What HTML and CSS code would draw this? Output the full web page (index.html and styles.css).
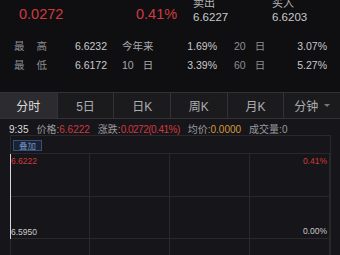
FILE: index.html
```html
<!DOCTYPE html>
<html lang="zh">
<head>
  <meta charset="UTF-8" />
  <meta name="viewport" content="width=device-width, initial-scale=1.0" />
  <title>分时</title>
  <link rel="stylesheet" href="styles.css">
</head>
<body>
  <div class="quote">
    <div class="q-main red">0.0272</div>
    <div class="q-main red">0.41%</div>
    <div class="q-side">
      <span class="q-label">卖出</span>
      <span class="q-val">6.6227</span>
    </div>
    <div class="q-side">
      <span class="q-label">买入</span>
      <span class="q-val">6.6203</span>
    </div>
  </div>

  <div class="stats">
    <span class="lbl wide">最<span class="sp">高</span></span>
    <span class="val">6.6232</span>
    <span class="lbl mid">今年来</span>
    <span class="val">1.69%</span>
    <span class="lbl end">20<span class="day">日</span></span>
    <span class="val">3.07%</span>

    <span class="lbl wide">最<span class="sp">低</span></span>
    <span class="val">6.6172</span>
    <span class="lbl mid">10<span class="day">日</span></span>
    <span class="val">3.39%</span>
    <span class="lbl end">60<span class="day">日</span></span>
    <span class="val">5.27%</span>
  </div>

  <nav class="tabs">
    <a class="active">分时</a>
    <a>5日</a>
    <a>日K</a>
    <a>周K</a>
    <a>月K</a>
    <a>分钟<i class="caret"></i></a>
  </nav>

  <section class="panel">
    <div class="info">
      <span class="time">9:35</span>
      <span>价格:<b class="red">6.6222</b></span>
      <span>涨跌:<b class="red tight">0.0272(0.41%)</b></span>
      <span>均价:<b class="gold">0.0000</b></span>
      <span>成交量:0</span>
    </div>

    <div class="chart">
      <div class="chart-head">
        <button class="overlay-btn">叠加</button>
      </div>
      <div class="grid">
        <div></div><div></div><div></div><div></div>
        <div></div><div></div><div></div><div></div>
        <div></div><div></div><div></div><div></div>
        <span class="axis tl up">6.6222</span>
        <span class="axis tr up">0.41%</span>
        <span class="axis bl">6.5950</span>
        <span class="axis br">0.00%</span>
        <span class="price-line"></span>
      </div>
    </div>
  </section>
</body>
</html>
```

FILE: styles.css
```css
* {
  margin: 0;
  padding: 0;
  box-sizing: border-box;
}
body {
  font-family: 'Liberation Sans', 'Noto Sans CJK SC', sans-serif;
  background: #0f0f11;
  color: #c9c9cb;
  width: 340px;
  height: 255px;
  overflow: hidden;
}
.red {
  color: #cf3a3f;
}
.gold {
  color: #d59a3c;
}
b {
  font-weight: normal;
}

/* top quote */
.quote {
  display: grid;
  grid-template-columns: 117px 57px 79px 1fr;
  padding-left: 19px;
  margin-top: -2px;
  height: 24px;
}
.q-main {
  padding-top: 8px;
  font-size: 14.5px;
  line-height: 16px;
}
.q-side {
  display: flex;
  flex-direction: column;
}
.q-label {
  font-size: 11px;
  line-height: 11px;
  color: #b5b5b8;
}
.q-val {
  margin-top: 2px;
  font-size: 11.5px;
  line-height: 13px;
  color: #c9c9cb;
}

/* high / low stats */
.stats {
  display: grid;
  grid-template-columns: 50px 43px 63px 47px 73px 37px;
  grid-template-rows: 19px 19px;
  align-items: center;
  padding: 14px 0 0 14px;
  height: 70px;
  font-size: 10.5px;
}
.lbl {
  color: #8d8d91;
  font-size: 10.5px;
}
.lbl.mid {
  padding-left: 15px;
  color: #a9a9ac;
}
.lbl.end {
  padding-left: 17px;
}
.sp {
  margin-left: 12px;
}
.day {
  margin-left: 9px;
}
.val {
  text-align: right;
  color: #c9c9cb;
}

/* period tabs */
.tabs {
  display: grid;
  grid-template-columns: repeat(6, 1fr);
  height: 27px;
  background: #1b1b1e;
  border-top: 1px solid #333337;
  border-bottom: 1px solid #333337;
}
.tabs a {
  display: flex;
  align-items: center;
  justify-content: center;
  font-size: 12px;
  color: #aeaeb2;
  border-left: 1px solid #333337;
}
.tabs a:first-child {
  border-left: none;
}
.tabs a.active {
  background: #2c2c30;
  color: #dcdcde;
}
.caret {
  display: inline-block;
  margin-left: 6px;
  border-left: 3px solid transparent;
  border-right: 3px solid transparent;
  border-top: 3px solid #77777b;
}

/* chart panel */
.panel {
  background: #161519;
  height: 136px;
}
.info {
  display: flex;
  gap: 8px;
  height: 16px;
  padding: 5px 0 0 9px;
  font-size: 10px;
  line-height: 11px;
  color: #9a9a9e;
}
.info .time {
  color: #dcdcde;
}
.info .tight {
  letter-spacing: -0.5px;
}
.chart {
  margin: 0 9px 0 10px;
  border: 1px solid #29292d;
  border-bottom: none;
  height: 120px;
}
.chart-head {
  height: 17px;
  padding: 4px 0 0 2px;
}
.overlay-btn {
  display: block;
  width: 29px;
  height: 11px;
  font-family: 'Noto Sans CJK SC', sans-serif;
  font-size: 8.5px;
  line-height: 9px;
  color: #6f8fc0;
  background: #1a2233;
  border: 1px solid #34507a;
}
.grid {
  position: relative;
  display: grid;
  grid-template-columns: repeat(4, 1fr);
  grid-template-rows: 43px 42px 30px;
  border-top: 1px solid #29292d;
  margin-left: -1px;
}
.grid div {
  border-right: 1px solid #29292d;
  border-bottom: 1px solid #29292d;
}
.axis {
  position: absolute;
  font-size: 8.5px;
  line-height: 9px;
  color: #c9c9cb;
  background: #161519;
}
.axis.up {
  color: #cf3a3f;
}
.axis.tl {
  top: 3px;
  left: 1px;
}
.axis.tr {
  top: 3px;
  right: 3px;
}
.axis.bl {
  top: 74px;
  left: 1px;
}
.axis.br {
  top: 73px;
  right: 3px;
}
.price-line {
  position: absolute;
  top: 0;
  left: 0;
  width: 1px;
  height: 85px;
  background: #d8d8da;
}
```
